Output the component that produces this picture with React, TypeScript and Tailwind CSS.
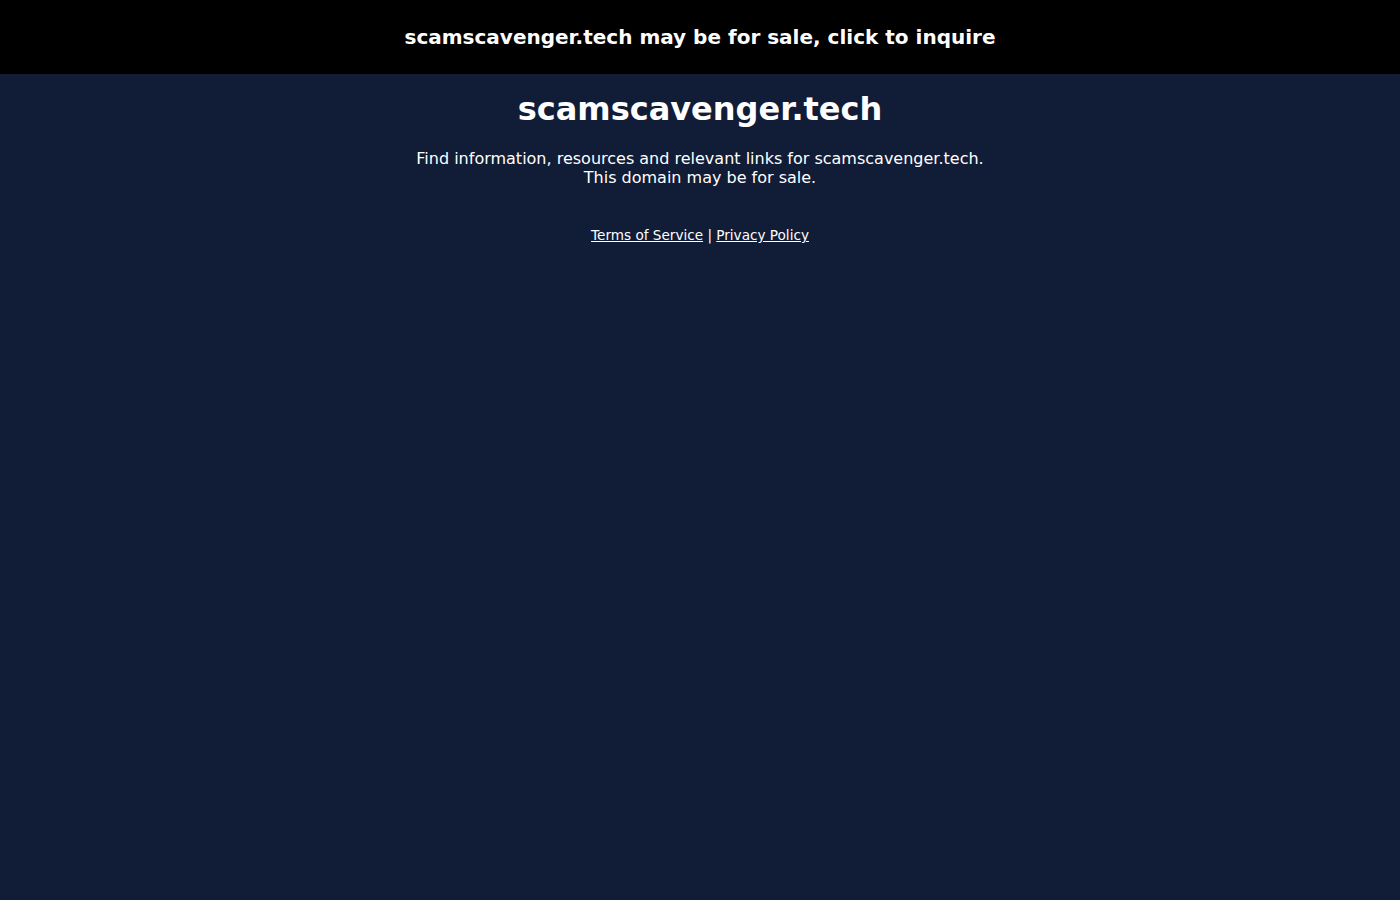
import React from 'react';

const App = () => {
  return (
    <div className="min-h-[900px] bg-[#111c36] text-white font-['DejaVu_Sans',sans-serif]">
      {/* Sale banner */}
      <a href="#" className="flex h-[74px] items-center justify-center bg-black text-[20px] font-bold text-white">
        scamscavenger.tech may be for sale, click to inquire
      </a>

      <div className="flex flex-col items-center text-center">
        <h1 className="mt-[17px] text-[32px] leading-[37px] font-bold">scamscavenger.tech</h1>
        <p className="mt-[21px] text-[16px] leading-[19px]">
          Find information, resources and relevant links for scamscavenger.tech.
          <br />
          This domain may be for sale.
        </p>
        <div className="mt-[40px] text-[13.6px] leading-[16px]">
          <a href="#" className="underline">Terms of Service</a> | <a href="#" className="underline">Privacy Policy</a>
        </div>
      </div>
    </div>
  );
};

export default App;
